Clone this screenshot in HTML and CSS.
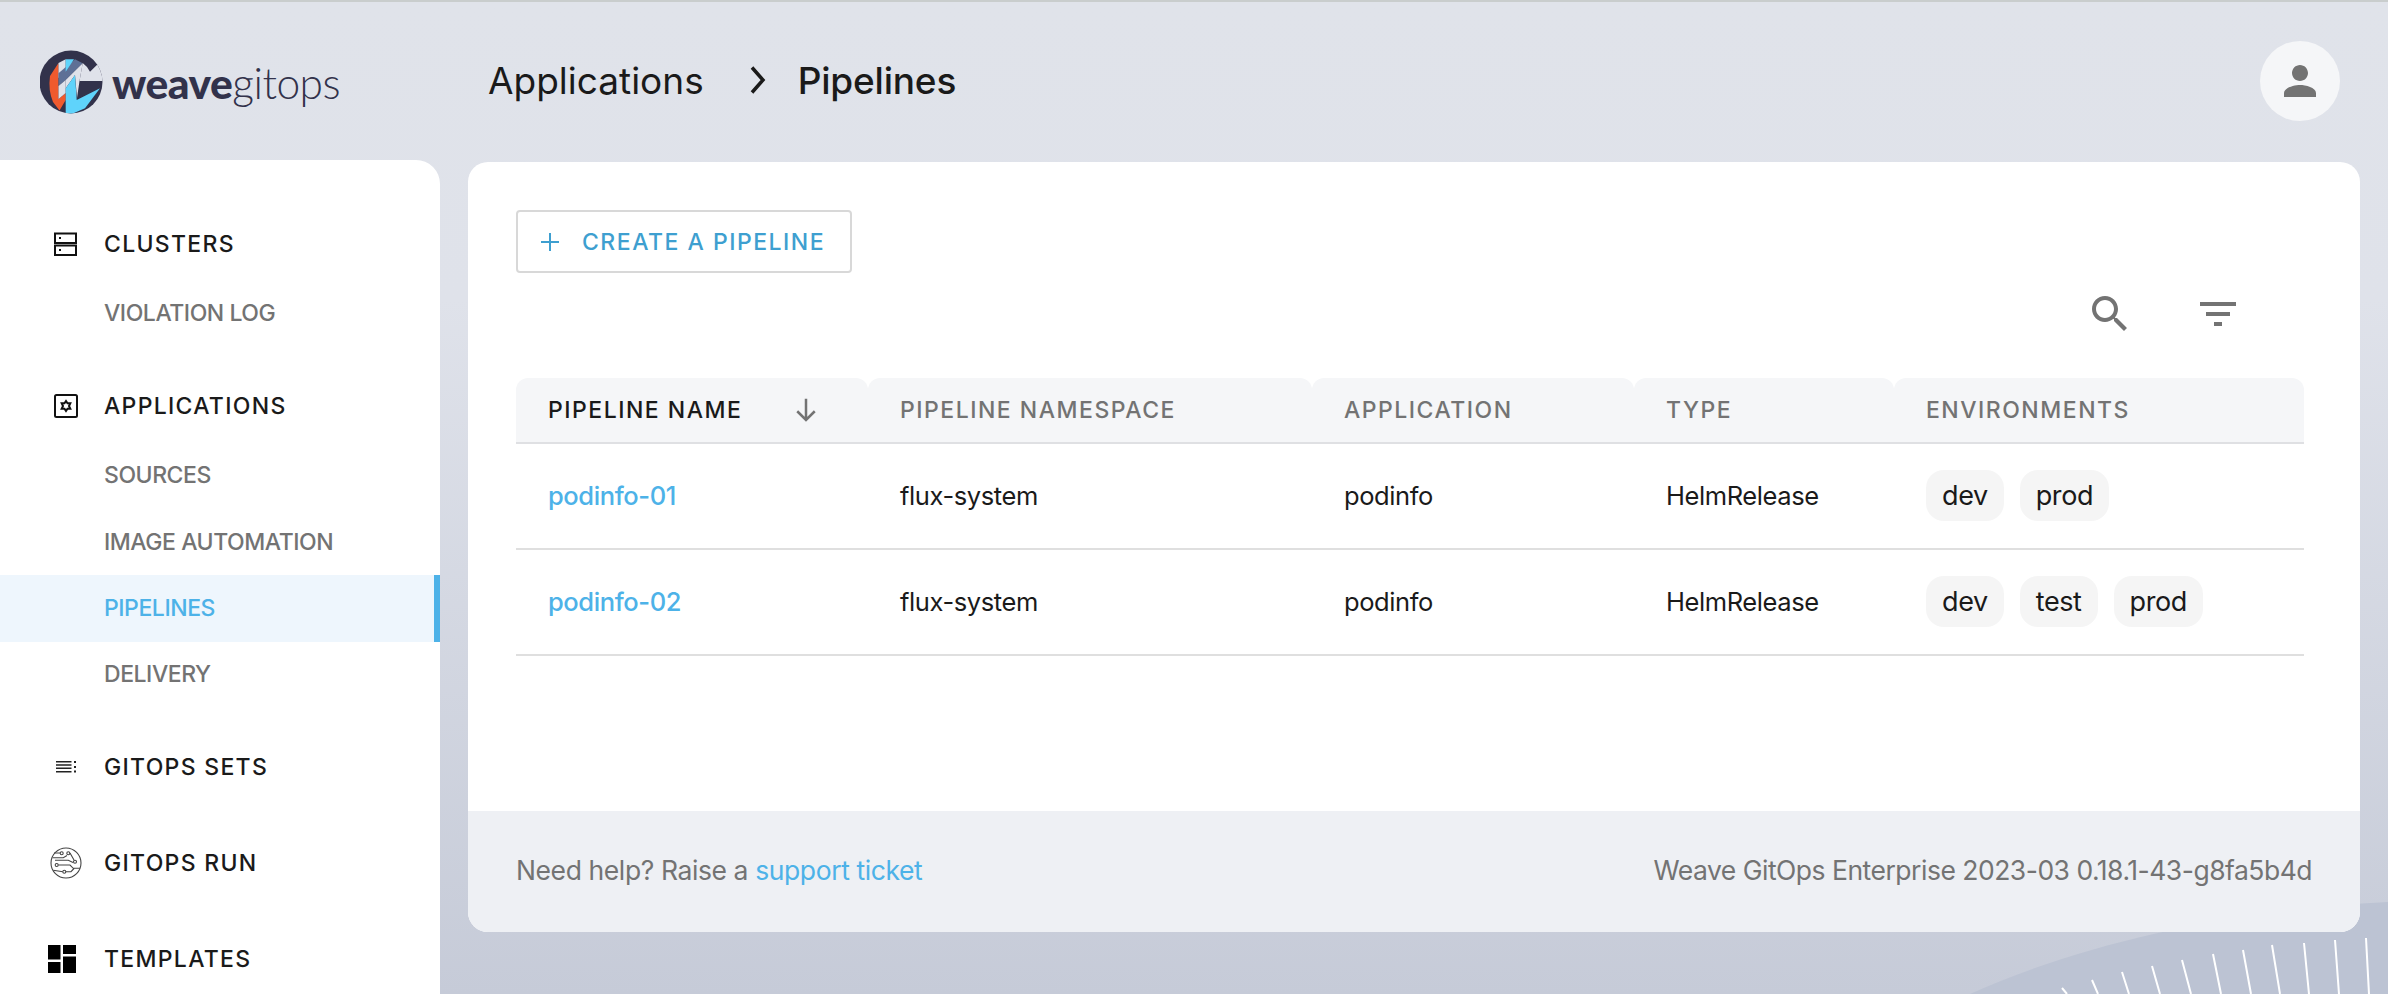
FILE: index.html
```html
<!DOCTYPE html>
<html lang="en">
<head>
<meta charset="utf-8">
<title>Pipelines</title>
<link rel="stylesheet" href="styles.css">
</head>
<body>
<div class="app">
  <header class="topbar">
    <div class="logo">
      <svg class="logo-mark" viewBox="0 0 64 64" aria-hidden="true">
        <defs><clipPath id="disc"><circle cx="31" cy="32" r="31.500"/></clipPath></defs>
        <g clip-path="url(#disc)">
          <rect width="64" height="64" fill="#32324b"/>
          <path d="M42.700 13Q47 16 50 21.700L66 6V31H39.500Z" fill="#dfe2ea"/>
          <path d="M18.500 13 L10 26 Q8 40 13 52 L19.500 60.500 L25.700 50 V43 L18.500 49 Z" fill="#f05a2e"/>
          <path d="M18.500 13 L25.700 9.300 V22 L18.500 28 Z" fill="#dfe2ea"/>
          <path d="M18.500 23.300 L27 16 L35 9.300 L42.700 13.300 L25.700 30 L18.500 36 Z" fill="#5e7096"/>
          <path d="M25.700 9.300 H34 L25.700 21.700 Z" fill="#5fd3fb"/>
          <path d="M18.500 36 L25.700 30 V43 L18.500 49 Z" fill="#dfe2ea"/>
          <path d="M25.700 30 L42.700 13.300 L39.500 31 L37 48 L35 25 L25.700 38.300 Z" fill="#dfe2ea"/>
          <path d="M25.700 38.300 L35 25 L36.700 50 L60 38.300 L45 58.300 L31.700 64 L25.700 63.500 Z" fill="#5fd3fb"/>
        </g>
      </svg>
      <span class="logo-text"><b>weave</b>gitops</span>
    </div>
    <nav class="crumbs">
      <span class="crumb">Applications</span>
      <svg class="crumb-sep" viewBox="0 0 24 32" aria-hidden="true"><path d="M5 3.500 16 16 5 28.500" /></svg>
      <span class="crumb current">Pipelines</span>
    </nav>
    <div class="avatar">
      <svg viewBox="0 0 24 24" aria-hidden="true"><path d="M12 12c2.200 0 4-1.800 4-4s-1.800-4-4-4-4 1.800-4 4 1.800 4 4 4zm0 2c-2.700 0-8 1.300-8 4v2h16v-2c0-2.700-5.300-4-8-4z"/></svg>
    </div>
  </header>

  <div class="body">
    <aside class="sidebar">
      <a class="nav-main first">
        <span class="nav-icon"><svg viewBox="0 0 24 24" width="24" height="24" class="ico-line"><rect x="1" y="1.500" width="21" height="9.500"/><rect x="1" y="13.500" width="21" height="9.500"/><path class="dot" d="M5 5h2v2H5zM5 17h2v2H5z"/></svg></span>
        CLUSTERS
      </a>
      <a class="nav-sub">VIOLATION LOG</a>
      <a class="nav-main">
        <span class="nav-icon"><svg viewBox="0 0 24 24" width="24" height="24" class="ico-line"><rect x="1" y="1" width="22" height="22" rx="1.500"/><path class="thin" d="M12 7l1.500 2.300 2.800-.1-1.300 2.800 1.300 2.800-2.800-.1L12 17l-1.500-2.300-2.800.1L9 12 7.700 9.200l2.800.1z"/></svg></span>
        APPLICATIONS
      </a>
      <a class="nav-sub">SOURCES</a>
      <a class="nav-sub">IMAGE AUTOMATION</a>
      <a class="nav-sub active">PIPELINES</a>
      <a class="nav-sub">DELIVERY</a>
      <a class="nav-main">
        <span class="nav-icon"><svg viewBox="0 0 24 24" width="24" height="24" class="ico-fill"><path d="M2 6h15.500v1.500H2zM2 9.300h15.500v1.500H2zM2 12.600h15.500v1.500H2zM2 16h15.500v1.500H2zM20 6h2v2h-2zM20 11h2v2h-2zM20 15.500h2v2h-2z"/></svg></span>
        GITOPS SETS
      </a>
      <a class="nav-main">
        <span class="nav-icon"><svg viewBox="0 0 32 32" width="32" height="32" class="ico-run"><circle cx="16" cy="16" r="15"/><path d="M4 6h6M2.700 10.700H13.300L17 8.500M5 13.300H18.300L23 15.500M20 6l4 7M8.300 18H20L23.300 21.300H30M3.300 23.300L12.800 24.700M16 24.700H21L24 21.500"/><circle class="node" cx="11.700" cy="6.300" r="1.500"/><circle class="node" cx="18.300" cy="6.300" r="1.500"/><circle class="node" cx="25" cy="14.700" r="1.500"/><circle class="node" cx="6.700" cy="18" r="1.500"/><circle class="node" cx="14.300" cy="24.700" r="1.500"/></svg></span>
        GITOPS RUN
      </a>
      <a class="nav-main">
        <span class="nav-icon"><svg viewBox="0 0 28 28" width="28" height="28" class="ico-fill tmpl"><path d="M0 0h12.500v14.500H0zM15 0h13v9H15zM15 11.500h13V28H15zM0 17h12.500v11H0z"/></svg></span>
        TEMPLATES
      </a>
    </aside>

    <main class="card">
      <div class="card-main">
        <button class="create" type="button">
          <svg viewBox="0 0 20 20" aria-hidden="true"><path d="M10 1v18M1 10h18"/></svg>
          CREATE A PIPELINE
        </button>
        <div class="tools">
          <svg viewBox="0 0 24 24" aria-hidden="true"><path d="M15.500 14h-.79l-.28-.27C15.410 12.590 16 11.110 16 9.500 16 5.910 13.090 3 9.500 3S3 5.910 3 9.500 5.910 16 9.500 16c1.610 0 3.090-.59 4.230-1.570l.27.28v.79l5 4.990L20.490 19l-4.990-5zm-6 0C7.010 14 5 11.990 5 9.500S7.010 5 9.500 5 14 7.010 14 9.500 11.990 14 9.500 14z"/></svg>
          <svg viewBox="0 0 24 24" aria-hidden="true"><path d="M10 18h4v-2h-4v2zM3 6v2h18V6H3zm3 7h12v-2H6v2z"/></svg>
        </div>
        <table class="grid">
          <colgroup>
            <col class="c1"><col class="c2"><col class="c3"><col class="c4"><col class="c5">
          </colgroup>
          <thead>
            <tr>
              <th class="sorted"><span class="th-in">PIPELINE NAME<svg viewBox="0 0 24 24" aria-hidden="true"><path d="M12 3v17M5 13l7 7 7-7"/></svg></span></th>
              <th>PIPELINE NAMESPACE</th>
              <th>APPLICATION</th>
              <th>TYPE</th>
              <th>ENVIRONMENTS</th>
            </tr>
          </thead>
          <tbody>
            <tr>
              <td><a class="link-name">podinfo-01</a></td>
              <td>flux-system</td>
              <td>podinfo</td>
              <td>HelmRelease</td>
              <td><div class="chips"><span class="chip">dev</span><span class="chip">prod</span></div></td>
            </tr>
            <tr>
              <td><a class="link-name">podinfo-02</a></td>
              <td>flux-system</td>
              <td>podinfo</td>
              <td>HelmRelease</td>
              <td><div class="chips"><span class="chip">dev</span><span class="chip">test</span><span class="chip">prod</span></div></td>
            </tr>
          </tbody>
        </table>
      </div>
      <footer class="card-foot">
        <span>Need help? Raise a <a class="foot-link">support ticket</a></span>
        <span class="version">Weave GitOps Enterprise 2023-03 0.18.1-43-g8fa5b4d</span>
      </footer>
    </main>
  </div>
  <svg class="swoosh" viewBox="0 0 488 214" aria-hidden="true">
    <path class="hill" d="M70 214C190 160 340 130 488 122V214Z"/>
    <path class="rays" d="M162 208l5 6M192 200l6 14M222 192l7 22M252 186l8 28M282 180l9 34M313 174l8 40M343 170l8 44M372 165l8 49M404 163l5 51M435 160l4 54M466 158l3 56"/>
  </svg>
</div>
</body>
</html>
```

FILE: styles.css
```css
* { box-sizing: border-box; }
html, body { margin: 0; height: 100%; }
body {
  font-family: "Inter", "Lato", sans-serif;
  color: #1a1a1a;
  overflow: hidden;
}
.app {
  position: relative;
  height: 994px;
  overflow: hidden;
  border-top: 2px solid #c9cdcd;
  background: linear-gradient(180deg, #e0e3ea 0%, #dfe2ea 30%, #c6cbd8 100%);
}
.topbar {
  display: flex;
  align-items: center;
  height: 158px;
  padding: 0 48px 0 40px;
}
.logo { display: flex; align-items: center; width: 448px; margin-top: 2px; }
.logo-mark { width: 64px; height: 64px; flex: none; }
.logo-text { margin-left: 8px; font-family: "Lato", sans-serif; font-size: 42.500px; font-weight: 300; color: #32324b; letter-spacing: -0.5px; }
.logo-text b { font-weight: 900; }
.crumbs { display: flex; align-items: center; flex: 1; padding-bottom: 2px; }
.crumb { font-size: 37px; font-weight: 400; color: #1a1a1a; }
.crumb.current { font-weight: 500; letter-spacing: -0.2px; }
.crumb-sep { width: 24px; height: 32px; margin: 0 27px 0 43px; fill: none; stroke: #1a1a1a; stroke-width: 3.500; }
.avatar {
  width: 80px; height: 80px; border-radius: 50%;
  background: #f5f6f8;
  display: flex; align-items: center; justify-content: center;
}
.avatar svg { width: 48px; height: 48px; fill: #737373; }
.body { display: flex; align-items: flex-start; height: 834px; }
.sidebar {
  width: 440px;
  height: 834px;
  flex: none;
  background: #fff;
  border-top-right-radius: 24px;
  padding-top: 47.500px;
  display: flex;
  flex-direction: column;
}
.nav-main {
  display: flex; align-items: center;
  height: 72px;
  flex: none;
  padding-left: 104px;
  position: relative;
  margin-top: 24px;
  font-size: 23px;
  font-weight: 500;
  letter-spacing: 1.300px;
  color: #1a1a1a;
}
.nav-main.first { margin-top: 0; }
.nav-icon {
  position: absolute; left: 66px; top: 50%;
  transform: translate(-50%, -50%);
  display: flex;
}
.ico-line rect { fill: none; stroke: #111; stroke-width: 2; }
.ico-line .dot { fill: #111; }
.ico-line .thin { fill: none; stroke: #111; stroke-width: 2; }
.ico-fill { fill: #222; }
.tmpl { fill: #000; transform: translateX(-4px); }
.ico-run { fill: none; stroke: #444; stroke-width: 1.100; }
.ico-run .node { fill: #fff; }
.nav-sub {
  display: flex; align-items: center;
  height: 66.500px;
  flex: none;
  padding-left: 104px;
  font-size: 23px;
  font-weight: 500;
  letter-spacing: -0.45px;
  color: #737373;
}
.nav-sub.active {
  background: #eef6fd;
  color: #4db2e8;
  border-right: 6px solid #4db2e8;
}
.nav-sub.active + .nav-sub { height: 65px; }
.card {
  width: 1892px;
  height: 770px;
  margin: 2px 0 0 28px;
  background: #fff;
  border-radius: 20px;
  overflow: hidden;
  display: flex;
  flex-direction: column;
  position: relative;
  z-index: 1;
}
.card-main { flex: 1; padding: 48px 56px 0 48px; }
.create {
  display: flex; align-items: center;
  height: 63px; width: 336px;
  padding: 0 0 0 22px;
  background: #fff;
  border: 2px solid #d8d8d8;
  border-radius: 4px;
  font: 500 23px "Inter", sans-serif;
  letter-spacing: 1.500px;
  color: #3e9fd0;
}
.create svg { width: 20px; height: 20px; margin-right: 22px; fill: none; stroke: #3e9fd0; stroke-width: 2; }
.tools { display: flex; justify-content: flex-end; gap: 60px; padding-right: 62px; height: 105px; align-items: center; padding-bottom: 24px; }
.tools svg { width: 48px; height: 48px; fill: #737373; }
.grid { width: 1788px; border-collapse: separate; border-spacing: 0; table-layout: fixed; }
.c1 { width: 352px; } .c2 { width: 444px; } .c3 { width: 322px; } .c4 { width: 260px; } .c5 { width: 410px; }
.grid th {
  height: 66px;
  padding: 0 0 0 32px;
  text-align: left;
  background: #f5f6f8;
  border-bottom: 2px solid #dfe0e3;
  border-radius: 12px 12px 0 0;
  font-size: 23px;
  font-weight: 500;
  letter-spacing: 1.500px;
  color: #737373;
}
.grid th.sorted { color: #1a1a1a; }
.th-in { display: flex; align-items: center; }
.th-in svg { width: 30px; height: 30px; margin-left: 49px; fill: none; stroke: #737373; stroke-width: 2; }
.grid td {
  height: 106px;
  padding: 0 0 2px 32px;
  border-bottom: 2px solid #dfdfdf;
  font-size: 25.500px;
  letter-spacing: -0.4px;
  color: #1a1a1a;
}
.link-name { color: #4db2e8; font-weight: 500; }
.chips { display: flex; gap: 16px; }
.chip { height: 51px; padding: 0 16px; display: flex; align-items: center; border-radius: 18px; background: #f5f5f5; color: #1a1a1a; font-size: 27px; }
.card-foot {
  height: 121px;
  flex: none;
  background: #eef0f4;
  padding: 0 48px 3px;
  display: flex; align-items: center; justify-content: space-between;
  font-size: 26.500px;
  letter-spacing: -0.4px;
  color: #737373;
}
.version { letter-spacing: -0.5px; }
.foot-link { color: #4db2e8; }
.swoosh { position: absolute; right: 0; bottom: 0; width: 488px; height: 214px; }
.hill { fill: #bcc3d3; }
.rays { fill: none; stroke: #fff; stroke-width: 2; }
```
